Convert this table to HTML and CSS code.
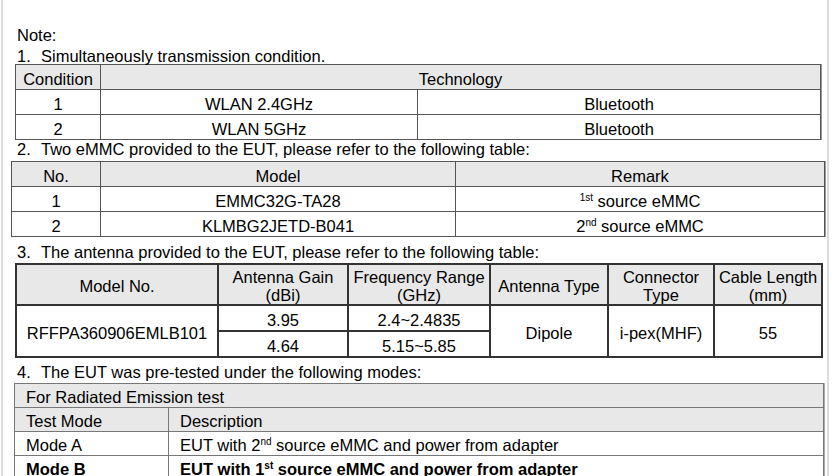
FILE: index.html
```html
<!DOCTYPE html>
<html>
<head>
<meta charset="utf-8">
<link rel="stylesheet" href="styles.css">
</head>
<body>
<div class="page">
  <p class="note">Note:</p>
  <p class="item i1"><span class="num">1.</span>Simultaneously transmission condition.</p>
  <table class="t t1">
    <colgroup><col style="width:85px"><col style="width:317px"><col style="width:403px"></colgroup>
    <tr class="head"><td>Condition</td><td colspan="2">Technology</td></tr>
    <tr><td>1</td><td>WLAN 2.4GHz</td><td>Bluetooth</td></tr>
    <tr><td>2</td><td>WLAN 5GHz</td><td>Bluetooth</td></tr>
  </table>
  <p class="item i2"><span class="num">2.</span>Two eMMC provided to the EUT, please refer to the following table:</p>
  <table class="t t2">
    <colgroup><col style="width:89px"><col style="width:355px"><col style="width:369px"></colgroup>
    <tr class="head"><td>No.</td><td>Model</td><td>Remark</td></tr>
    <tr><td>1</td><td>EMMC32G-TA28</td><td><sup>1st</sup> source eMMC</td></tr>
    <tr><td>2</td><td>KLMBG2JETD-B041</td><td>2<sup>nd</sup> source eMMC</td></tr>
  </table>
  <p class="item i3"><span class="num">3.</span>The antenna provided to the EUT, please refer to the following table:</p>
  <table class="t t3">
    <colgroup><col style="width:202px"><col style="width:130px"><col style="width:142px"><col style="width:118px"><col style="width:106px"><col style="width:108px"></colgroup>
    <tr class="head"><td>Model No.</td><td>Antenna Gain<br>(dBi)</td><td>Frequency Range<br>(GHz)</td><td>Antenna Type</td><td>Connector<br>Type</td><td>Cable Length<br>(mm)</td></tr>
    <tr><td rowspan="2">RFFPA360906EMLB101</td><td>3.95</td><td>2.4~2.4835</td><td rowspan="2">Dipole</td><td rowspan="2">i-pex(MHF)</td><td rowspan="2">55</td></tr>
    <tr><td>4.64</td><td>5.15~5.85</td></tr>
  </table>
  <p class="item i4"><span class="num">4.</span>The EUT was pre-tested under the following modes:</p>
  <table class="t t4">
    <colgroup><col style="width:154px"><col style="width:655px"></colgroup>
    <tr class="head"><td colspan="2">For Radiated Emission test</td></tr>
    <tr class="head"><td>Test Mode</td><td>Description</td></tr>
    <tr><td>Mode A</td><td>EUT with 2<sup>nd</sup> source eMMC and power from adapter</td></tr>
    <tr class="bold"><td>Mode B</td><td>EUT with 1<sup>st</sup> source eMMC and power from adapter</td></tr>
  </table>
</div>
</body>
</html>
```

FILE: styles.css
```css
html, body {
  margin: 0;
  padding: 0;
  background: #fff;
}
body {
  font-family: "Liberation Sans", Arial, sans-serif;
  font-size: 16.5px;
  color: #000;
}
.page {
  margin-left: 1px;
  width: 828px;
  height: 476px;
  border-left: 2px solid #dcdcdc;
  border-right: 2px solid #dcdcdc;
  padding-top: 26px;
  box-sizing: border-box;
  overflow: hidden;
}
p {
  margin: 0;
  line-height: 18px;
  padding-left: 14px;
}
.note { margin-top: 0; }
.item { margin-top: 3px; }
.num {
  display: inline-block;
  width: 24px;
}
.i2 { margin-top: 0; }
.i3 { margin-top: 6px; }
.i4 { margin-top: 5px; }

.t {
  border-collapse: collapse;
  table-layout: fixed;
}
.t td {
  border: 1px solid #555;
  text-align: center;
  padding: 4px 0 0 0;
  line-height: 20px;
  height: 20px;
  white-space: nowrap;
}
.t .head td {
  background: #e8e8e8;
}
.t1 {
  margin-left: 12px;
  margin-top: -1px;
  box-shadow: 1px 0 0 #999;
}
.t2 {
  margin-left: 8px;
  margin-top: 3px;
  box-shadow: 1px 0 0 #999;
}
.t3 {
  margin-left: 12px;
  margin-top: 2px;
}
.t3 td {
  border: 2px solid #333;
  padding-top: 4px;
  height: 19px;
}
.t3 .head td {
  line-height: 18px;
  height: 36px;
  padding: 3px 0 0;
}
.t4 {
  margin-left: 11px;
  margin-top: 2px;
  box-shadow: 1px 0 0 #aaa;
}
.t4 td {
  border-color: #777;
  text-align: left;
  padding: 2px 0 0 11px;
  height: 21px;
  line-height: 20px;
}
.t4 .bold td {
  font-weight: bold;
}
sup {
  font-size: 10px;
  line-height: 0;
  vertical-align: 6px;
}
```
